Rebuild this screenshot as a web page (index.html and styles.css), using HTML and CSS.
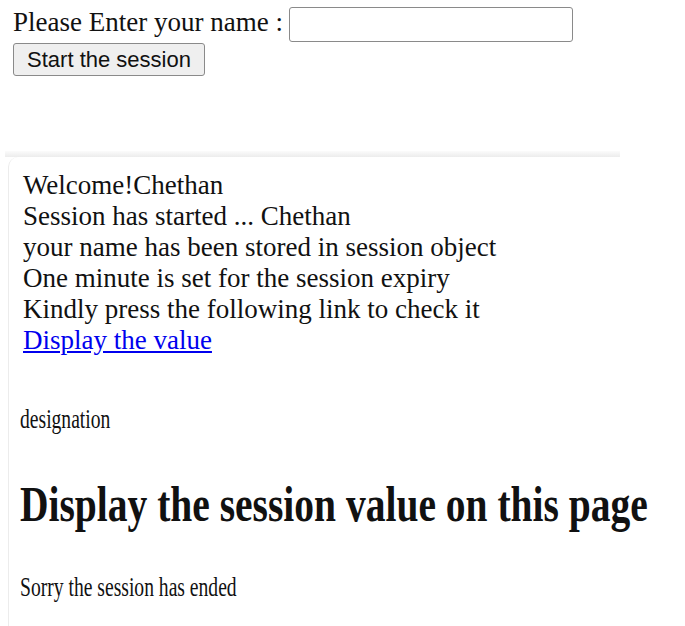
FILE: index.html
```html
<!DOCTYPE html>
<html>
<head>
<meta charset="utf-8">
<link rel="stylesheet" href="styles.css">
</head>
<body>
<form class="entry">
  <div class="entry-row">
    <label class="entry-label" for="name">Please Enter your name :</label>
    <input class="entry-input" id="name" type="text">
  </div>
  <button class="entry-button" type="button">Start the session</button>
</form>

<div class="shot">
  <div class="shot-edge"></div>
  <div class="shot-card">
    <div class="welcome">
      <div>Welcome!Chethan</div>
      <div>Session has started ... Chethan</div>
      <div>your name has been stored in session object</div>
      <div>One minute is set for the session expiry</div>
      <div>Kindly press the following link to check it</div>
      <a class="welcome-link" href="#">Display the value</a>
    </div>
  </div>
  <div class="shot-card2">
    <p class="cond small">designation</p>
    <h1 class="cond heading">Display the session value on this page</h1>
    <p class="cond small">Sorry the session has ended</p>
  </div>
</div>
</body>
</html>
```
FILE: styles.css
```css
html, body {
  margin: 0;
  padding: 0;
  background: #fff;
}
body {
  font-family: "Liberation Serif", "Times New Roman", serif;
  color: #111;
  width: 685px;
  height: 626px;
  overflow: hidden;
}
.entry {
  padding: 6px 0 0 13px;
  margin: 0;
}
.entry-row {
  display: flex;
  align-items: center;
  gap: 6px;
  height: 36px;
}
.entry-label {
  font-size: 27px;
  margin-top: -4px;
}
.entry-input {
  width: 284px;
  height: 35px;
  box-sizing: border-box;
  border: 1px solid #8a8a8a;
  border-radius: 3px;
  margin: 0;
}
.entry-button {
  margin-top: 1px;
  width: 192px;
  height: 33px;
  font-family: "Liberation Sans", Arial, sans-serif;
  font-size: 22px;
  color: #111;
  background: #efefef;
  border: 1px solid #8a8a8a;
  border-radius: 3px;
  padding: 0;
}
.shot {
  margin-top: 75px;
}
.shot-edge {
  margin-left: 5px;
  width: 615px;
  height: 6px;
  background: linear-gradient(#fbfbfb, #ececec);
}
.shot-card {
  margin-left: 8px;
  border-left: 1px solid #ececec;
  border-top-left-radius: 10px;
  padding: 13px 0 30px 14px;
}
.welcome {
  font-size: 27px;
  line-height: 31px;
  color: #111;
}
.welcome-link {
  color: #0000ee;
  text-decoration: underline;
}
.shot-card2 {
  margin-left: 8px;
  border-left: 1px solid #ececec;
  padding: 1px 0 20px 11px;
}
.cond {
  transform: scaleX(0.7);
  transform-origin: left center;
  white-space: nowrap;
}
.small {
  font-size: 28px;
  margin: 16px 0;
}
.heading {
  font-size: 50px;
  font-weight: bold;
  transform: scaleX(0.79);
  margin: 40px 0 38px;
}
```
